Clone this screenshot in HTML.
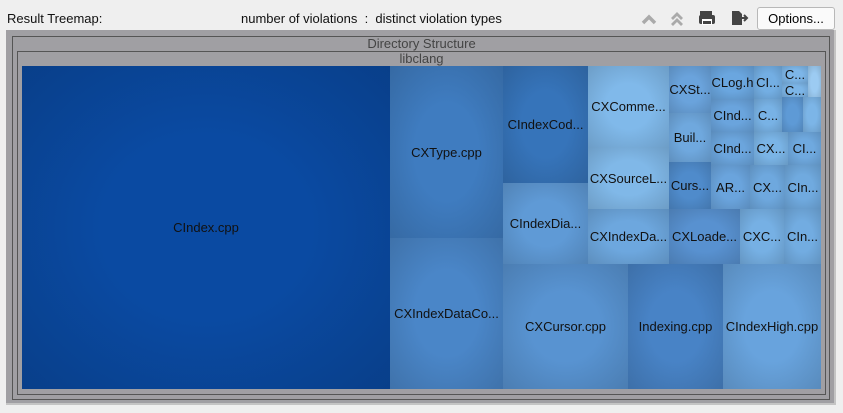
<!DOCTYPE html>
<html><head><style>
*{margin:0;padding:0;box-sizing:border-box}
body{width:843px;height:413px;background:#efefef;font-family:"Liberation Sans",sans-serif;position:relative;overflow:hidden}
.t{position:absolute;font-size:13px;color:#111}
.frame{position:absolute;left:6px;top:30px;width:830px;height:375px;background:#a09fa3;border-right:2px solid #c4c4c4;border-bottom:2px solid #c4c4c4}
.b1{position:absolute;left:12px;top:36px;width:818px;height:364px;border:1px solid #555}
.b2{position:absolute;left:17px;top:51px;width:809px;height:344px;border:1px solid #555}
.lbl{position:absolute;font-size:13px;color:#444;text-align:center}
.c{position:absolute;display:flex;align-items:center;justify-content:center;font-size:13px;color:#111;overflow:hidden;white-space:nowrap}
.btn{position:absolute;left:757px;top:7px;width:78px;height:23px;background:#fafafa;border:1px solid #b8b8b8;border-radius:3px;font-size:13px;display:flex;align-items:center;justify-content:center}
</style></head><body>
<div class="t" style="left:7px;top:11px">Result Treemap:</div>
<div class="t" style="left:241px;top:11px">number of violations &nbsp;:&nbsp; distinct violation types</div>
<svg style="position:absolute;left:640px;top:8px" width="120" height="20">
<path d="M3 15 L9 9 L15 15" stroke="#aaa" stroke-width="3.5" fill="none"/>
<path d="M32 11 L37 6 L42 11 M32 17 L37 12 L42 17" stroke="#aaa" stroke-width="2.8" fill="none"/>
<rect x="60" y="3" width="12" height="5" fill="#444"/><rect x="59" y="7" width="16" height="9" rx="2" fill="#444"/><rect x="62" y="11" width="10" height="6" fill="#fff"/><rect x="63" y="13" width="8" height="3" fill="#444"/>
<path d="M92 3 H99 L102 6 V17 H92 Z" fill="#444"/><path d="M100 10 H106 M104 7 L107 10 L104 13" stroke="#444" stroke-width="2" fill="none"/>
</svg>
<div class="btn">Options...</div>
<div class="frame"></div>
<div class="b1"></div>
<div class="b2"></div>
<div class="lbl" style="left:12px;top:36px;width:819px">Directory Structure</div>
<div class="lbl" style="left:17px;top:51px;width:809px">libclang</div>
<div id="m"></div>
<script>
var d=[
[22,66,390,389,'#0a4aa2','CIndex.cpp'],
[390,66,503,238,'#3f7cc0','CXType.cpp'],
[390,238,503,389,'#4a86c8','CXIndexDataCo...'],
[503,66,588,183,'#3674ba','CIndexCod...'],
[503,183,588,264,'#5f9ad6','CIndexDia...'],
[503,264,628,389,'#5893d1','CXCursor.cpp'],
[628,264,723,389,'#4883c6','Indexing.cpp'],
[723,264,821,389,'#68a3dd','CIndexHigh.cpp'],
[588,66,669,147,'#80b9ea','CXComme...'],
[588,147,669,209,'#80b8e8','CXSourceL...'],
[588,209,669,264,'#6da7de','CXIndexDa...'],
[669,66,711,113,'#6aa3dc','CXSt...'],
[669,113,711,162,'#6fa8de','Buil...'],
[669,162,711,209,'#4f8bcb','Curs...'],
[669,209,740,264,'#5891d0','CXLoade...'],
[711,66,754,99,'#6aa6df','CLog.h'],
[754,66,782,99,'#73aee3','CI...'],
[782,66,808,83,'#7db6e8','C...'],
[782,83,808,97,'#7cb5e7','C...'],
[808,66,821,99,'#9ccbf2',''],
[782,97,803,132,'#5e9ad6',''],
[803,97,821,132,'#7cb5e7',''],
[711,99,754,132,'#6aa4dd','CInd...'],
[754,99,782,132,'#78b2e5','C...'],
[711,132,754,165,'#6ba5dd','CInd...'],
[754,132,788,165,'#7ab4e6','CX...'],
[788,132,821,165,'#6fa9df','CI...'],
[711,165,750,209,'#6aa4dd','AR...'],
[750,165,785,209,'#6ea8de','CX...'],
[785,165,821,209,'#70aadf','CIn...'],
[740,209,784,264,'#76b0e4','CXC...'],
[784,209,821,264,'#72ace1','CIn...']];
var h='';d.forEach(function(a){h+='<div class="c" style="left:'+a[0]+'px;top:'+a[1]+'px;width:'+(a[2]-a[0])+'px;height:'+(a[3]-a[1])+'px;background:radial-gradient(ellipse at center,'+a[4]+' 0%,'+a[4]+' 40%,color-mix(in srgb,'+a[4]+' 85%,#000) 100%)">'+a[5]+'</div>'});
document.getElementById('m').innerHTML=h;
</script>
</body></html>
